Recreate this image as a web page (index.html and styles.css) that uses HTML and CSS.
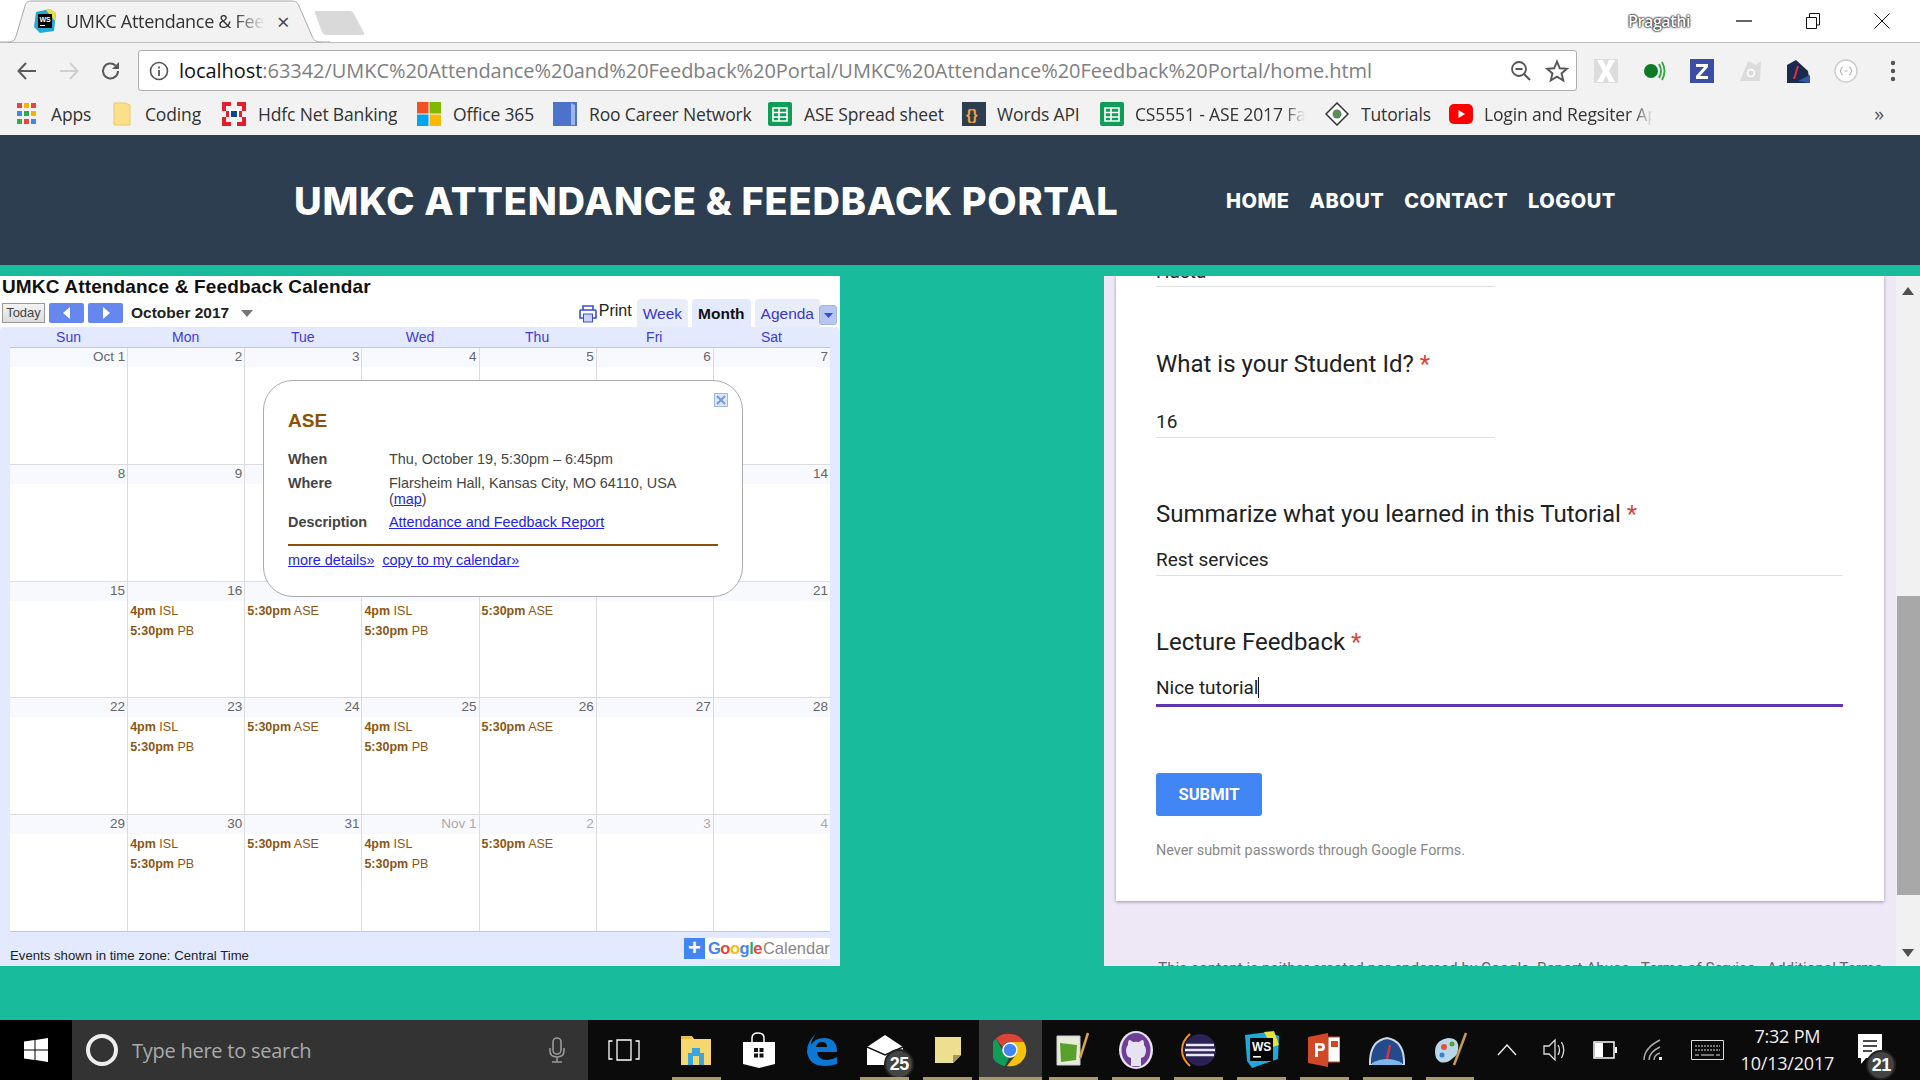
FILE: index.html
```html
<!DOCTYPE html>
<html lang="en">
<head>
<meta charset="utf-8">
<title>UMKC Attendance &amp; Feedback Portal</title>
<link rel="stylesheet" href="styles.css">
</head>
<body>
<div class="chrome">
  <div class="tabstrip">
    <div class="tab">
      <svg class="tab-shape" width="330" height="43" viewBox="0 0 330 43"><path d="M0 42H8C14 42 15 40 17 33L25 6C26 2 28 1 32 1H292C296 1 297 2 299 6L312 36C314 40 315 42 322 42H330" fill="#f2f2f2" stroke="#a9a9a9"/><path d="M0 42.5H8M322 42.5H330" stroke="#bbb"/></svg>
      <svg class="favicon" width="22" height="24" viewBox="0 0 22 24"><path d="M2 3 16 0 22 4 20 22 6 24 0 18Z" fill="#1fa8d8"/><path d="M12 1 16 0 22 4 21 12Z" fill="#e6e23a"/><rect x="4" y="5" width="14" height="14" fill="#000"/><text x="5.5" y="13" class="fav-text">WS</text><rect x="6" y="16" width="5" height="1" fill="#fff"/></svg>
      <span class="tab-title">UMKC Attendance &amp; Feedback Portal</span>
      <span class="tab-close">×</span>
    </div>
    <svg class="newtab" width="52" height="26" viewBox="0 0 52 26"><path d="M2 1H36C38 1 39 2 40 4L50 23C51 25 50 25 48 25H12C10 25 9 24 8 22L1 3C1 2 1 1 2 1Z" fill="#d9d9d9"/></svg>
    <span class="profile">Pragathi</span>
    <div class="winbtns">
      <svg width="16" height="16" viewBox="0 0 16 16"><path d="M0 8H16" stroke="#111" stroke-width="1.3"/></svg>
      <svg width="16" height="16" viewBox="0 0 16 16"><path d="M1.5 4.5H11.5V15.5H1.5ZM4.5 4V.5H14.5V12H12" fill="none" stroke="#111"/></svg>
      <svg width="16" height="16" viewBox="0 0 16 16"><path d="M.5.5 15.5 15.5M15.5.5 .5 15.5" stroke="#111"/></svg>
    </div>
  </div>
  <div class="toolbar">
    <div class="navs">
      <svg width="22" height="22" viewBox="0 0 22 22"><path d="M20 11H3M10 3 2.5 11 10 19" fill="none" stroke="#5a5a5a" stroke-width="2"/></svg>
      <svg width="22" height="22" viewBox="0 0 22 22"><path d="M2 11H19M12 3 19.5 11 12 19" fill="none" stroke="#cfcfcf" stroke-width="2"/></svg>
      <svg width="22" height="22" viewBox="0 0 22 22"><path d="M18 11A7.500 7.500 0 1 1 15.500 5.400" fill="none" stroke="#5a5a5a" stroke-width="2"/><path d="M19 2V9H12Z" fill="#5a5a5a"/></svg>
    </div>
    <div class="omnibox">
      <svg width="20" height="20" viewBox="0 0 20 20"><circle cx="10" cy="10" r="8.500" fill="none" stroke="#555" stroke-width="1.600"/><path d="M10 9V15M10 5.500V7.500" stroke="#555" stroke-width="1.800"/></svg>
      <span class="url"><b>localhost</b>:63342/UMKC%20Attendance%20and%20Feedback%20Portal/UMKC%20Attendance%20Feedback%20Portal/home.html</span>
      <svg width="22" height="22" viewBox="0 0 22 22"><circle cx="9" cy="9" r="7" fill="none" stroke="#555" stroke-width="1.800"/><path d="M5.500 9H12.500M14 14 20 20" stroke="#555" stroke-width="2"/></svg>
      <svg class="star" width="24" height="24" viewBox="0 0 24 24"><path d="M12 2.500 14.800 9.300 22 9.800 16.500 14.400 18.300 21.500 12 17.700 5.700 21.500 7.500 14.400 2 9.800 9.200 9.300Z" fill="none" stroke="#555" stroke-width="1.900"/></svg>
    </div>
    <div class="exts">
      <svg width="24" height="24" viewBox="0 0 24 24"><rect width="24" height="24" fill="#ddd"/><path d="M3 1H9L12 8 15 1H21L15 12 21 23H15L12 16 9 23H3L9 12Z" fill="#fff"/></svg>
      <svg width="24" height="24" viewBox="0 0 24 24"><circle cx="9" cy="12" r="7" fill="#0d7a25"/><path d="M17 5Q21 12 17 19M20 3Q25 12 20 21" fill="none" stroke="#2aa63f" stroke-width="1.800"/></svg>
      <svg width="24" height="24" viewBox="0 0 24 24"><rect width="24" height="24" fill="#3b4ea6"/><path d="M6 5H18V8L10 17H18V20H6V17L14 8H6Z" fill="#fff"/></svg>
      <svg width="24" height="24" viewBox="0 0 24 24"><path d="M2 22 10 2 18 6 23 2 22 22Z" fill="#dcdcdc"/><circle cx="13" cy="14" r="3.500" fill="none" stroke="#fff" stroke-width="1.500"/></svg>
      <svg width="24" height="24" viewBox="0 0 24 24"><path d="M1 24V6L10 1 22 12 24 24Z" fill="#1c2a52"/><path d="M8 20 12 7" stroke="#d9323f" stroke-width="2"/><path d="M12 22 24 24V16Z" fill="#2b59b0"/></svg>
      <svg width="24" height="24" viewBox="0 0 24 24"><circle cx="12" cy="12" r="11" fill="#fff" stroke="#ccc" stroke-width="1.400"/><path d="M9 8Q7 8 7 10V11L6 12 7 13V14Q7 16 9 16M15 8Q17 8 17 10V11L18 12 17 13V14Q17 16 15 16M10.500 12H13.500" fill="none" stroke="#aaa"/></svg>
      <svg class="menu-dots" width="6" height="22" viewBox="0 0 6 22"><circle cx="3" cy="3" r="2.200" fill="#555"/><circle cx="3" cy="11" r="2.200" fill="#555"/><circle cx="3" cy="19" r="2.200" fill="#555"/></svg>
    </div>
  </div>
  <div class="bookmarks">
    <a class="bm b-apps"><svg width="20" height="22" viewBox="0 0 20 22"><g fill="#e8453c"><rect width="5" height="5"/><rect x="7" width="5" height="5" fill="#f4b400"/><rect x="14" width="5" height="5" fill="#e8453c"/></g><rect y="8" width="5" height="5" fill="#4285f4"/><rect x="7" y="8" width="5" height="5" fill="#34a853"/><rect x="14" y="8" width="5" height="5" fill="#f4b400"/><rect y="16" width="5" height="5" fill="#34a853"/><rect x="7" y="16" width="5" height="5" fill="#e8453c"/><rect x="14" y="16" width="5" height="5" fill="#4285f4"/></svg><span>Apps</span></a>
    <a class="bm b-coding"><svg width="18" height="24" viewBox="0 0 18 24"><path d="M1 1H12L17 3V23H1Z" fill="#fbe08a" stroke="#e8c96a"/></svg><span>Coding</span></a>
    <a class="bm b-hdfc"><svg width="24" height="24" viewBox="0 0 24 24"><path d="M0 0H9V4H4V9H0ZM15 0H24V9H20V4H15ZM0 15H4V20H9V24H0ZM20 15H24V24H15V20H20Z" fill="#e31e2d"/><rect x="4" y="9" width="16" height="6" fill="#e31e2d"/><rect x="7" y="7" width="10" height="10" fill="#fff"/><rect x="9" y="9" width="6" height="6" fill="#004c8f"/></svg><span>Hdfc Net Banking</span></a>
    <a class="bm b-office"><svg width="24" height="24" viewBox="0 0 24 24"><rect width="11.500" height="11.500" fill="#f25022"/><rect x="12.500" width="11.500" height="11.500" fill="#7fba00"/><rect y="12.500" width="11.500" height="11.500" fill="#00a4ef"/><rect x="12.500" y="12.500" width="11.500" height="11.500" fill="#ffb900"/></svg><span>Office 365</span></a>
    <a class="bm b-roo"><svg width="24" height="24" viewBox="0 0 24 24"><rect width="24" height="24" fill="#4d72c9"/><path d="M18 1 22 3V23H18Z" fill="#9db4e6"/></svg><span>Roo Career Network</span></a>
    <a class="bm b-ase"><svg width="24" height="24" viewBox="0 0 24 24"><rect width="24" height="24" rx="2" fill="#0f9d58"/><path d="M5 6H19V19H5ZM5 10.500H19M5 15H19M11 6V19" fill="none" stroke="#fff" stroke-width="1.600"/></svg><span>ASE Spread sheet</span></a>
    <a class="bm b-words"><svg width="24" height="24" viewBox="0 0 24 24"><rect width="24" height="24" fill="#2c3e50"/><text x="4" y="18" class="brace">{}</text></svg><span>Words API</span></a>
    <a class="bm b-cs"><svg width="24" height="24" viewBox="0 0 24 24"><rect width="24" height="24" rx="2" fill="#0f9d58"/><path d="M5 6H19V19H5ZM5 10.500H19M5 15H19M11 6V19" fill="none" stroke="#fff" stroke-width="1.600"/></svg><span class="fade">CS5551 - ASE 2017 Fall</span></a>
    <a class="bm b-tut"><svg width="24" height="24" viewBox="0 0 24 24"><path d="M12 1 23 12 12 23 1 12Z" fill="#fff" stroke="#333" stroke-width="1.500"/><circle cx="12" cy="12" r="4.500" fill="#5b8a5b"/></svg><span>Tutorials</span></a>
    <a class="bm b-login"><svg width="24" height="24" viewBox="0 0 24 24"><rect y="2" width="24" height="20" rx="5" fill="#f00"/><path d="M9.500 8V16L16 12Z" fill="#fff"/></svg><span class="fade">Login and Regsiter App</span></a>
    <span class="more">»</span>
  </div>
</div>

<header class="site-header">
  <h1 class="site-title">UMKC ATTENDANCE &amp; FEEDBACK PORTAL</h1>
  <nav class="site-nav"><a>HOME</a><a>ABOUT</a><a>CONTACT</a><a>LOGOUT</a></nav>
</header>

<main class="stage">
  <section class="calendar">
    <div class="cal-title">UMKC Attendance &amp; Feedback Calendar</div>
    <div class="cal-bar">
      <span class="today">Today</span>
      <span class="arrow-btn"><svg width="10" height="12" viewBox="0 0 10 12"><path d="M8 0V12L1 6Z" fill="#fff"/></svg></span>
      <span class="arrow-btn"><svg width="10" height="12" viewBox="0 0 10 12"><path d="M2 0V12L9 6Z" fill="#fff"/></svg></span>
      <span class="cal-month">October 2017</span>
      <svg class="month-caret" width="12" height="7" viewBox="0 0 12 7"><path d="M0 0H12L6 7Z" fill="#777"/></svg>
      <span class="cal-bar-right">
        <svg class="print-ico" width="18" height="18" viewBox="0 0 18 18"><path d="M4 5V1H14V5M4 13H1V6Q1 5 2 5H16Q17 5 17 6V13H14" fill="none" stroke="#3a4ae0" stroke-width="1.600"/><rect x="4.500" y="9" width="9" height="8" fill="#cdd3f5" stroke="#3a4ae0"/></svg>
        <span class="print">Print</span>
        <span class="vtab">Week</span>
        <span class="vtab active">Month</span>
        <span class="vtab">Agenda</span>
        <span class="vdrop"><svg width="9" height="5" viewBox="0 0 9 5"><path d="M0 0H9L4.500 5Z" fill="#3a4ae0"/></svg></span>
      </span>
    </div>
    <div class="cal-frame">
      <div class="dow"><span>Sun</span><span>Mon</span><span>Tue</span><span>Wed</span><span>Thu</span><span>Fri</span><span>Sat</span></div>
      <div class="weeks">
        <div class="week">
          <div class="day"><div class="num">Oct 1</div></div><div class="day"><div class="num">2</div></div><div class="day"><div class="num">3</div></div><div class="day"><div class="num">4</div></div><div class="day"><div class="num">5</div></div><div class="day"><div class="num">6</div></div><div class="day"><div class="num">7</div></div>
        </div>
        <div class="week">
          <div class="day"><div class="num">8</div></div><div class="day"><div class="num">9</div></div><div class="day"><div class="num"></div></div><div class="day"><div class="num"></div></div><div class="day"><div class="num"></div></div><div class="day"><div class="num"></div></div><div class="day"><div class="num">14</div></div>
        </div>
        <div class="week">
          <div class="day"><div class="num">15</div></div>
          <div class="day"><div class="num">16</div><p class="ev"><b>4pm</b> ISL</p><p class="ev"><b>5:30pm</b> PB</p></div>
          <div class="day"><div class="num"></div><p class="ev"><b>5:30pm</b> ASE</p></div>
          <div class="day"><div class="num"></div><p class="ev"><b>4pm</b> ISL</p><p class="ev"><b>5:30pm</b> PB</p></div>
          <div class="day"><div class="num"></div><p class="ev"><b>5:30pm</b> ASE</p></div>
          <div class="day"><div class="num"></div></div>
          <div class="day"><div class="num">21</div></div>
        </div>
        <div class="week">
          <div class="day"><div class="num">22</div></div>
          <div class="day"><div class="num">23</div><p class="ev"><b>4pm</b> ISL</p><p class="ev"><b>5:30pm</b> PB</p></div>
          <div class="day"><div class="num">24</div><p class="ev"><b>5:30pm</b> ASE</p></div>
          <div class="day"><div class="num">25</div><p class="ev"><b>4pm</b> ISL</p><p class="ev"><b>5:30pm</b> PB</p></div>
          <div class="day"><div class="num">26</div><p class="ev"><b>5:30pm</b> ASE</p></div>
          <div class="day"><div class="num">27</div></div>
          <div class="day"><div class="num">28</div></div>
        </div>
        <div class="week">
          <div class="day"><div class="num">29</div></div>
          <div class="day"><div class="num">30</div><p class="ev"><b>4pm</b> ISL</p><p class="ev"><b>5:30pm</b> PB</p></div>
          <div class="day"><div class="num">31</div><p class="ev"><b>5:30pm</b> ASE</p></div>
          <div class="day"><div class="num off">Nov 1</div><p class="ev"><b>4pm</b> ISL</p><p class="ev"><b>5:30pm</b> PB</p></div>
          <div class="day"><div class="num off">2</div><p class="ev"><b>5:30pm</b> ASE</p></div>
          <div class="day"><div class="num off">3</div></div>
          <div class="day"><div class="num off">4</div></div>
        </div>
      </div>
      <div class="cal-foot">
        <span>Events shown in time zone: Central Time</span>
        <span class="gcal"><span class="gplus">+</span><span class="glogo"><i class="g-b">G</i><i class="g-r">o</i><i class="g-y">o</i><i class="g-b">g</i><i class="g-g">l</i><i class="g-r">e</i></span><span class="gword">Calendar</span></span>
      </div>
    </div>
    <div class="bubble">
      <svg class="bubble-close" width="14" height="14" viewBox="0 0 14 14"><rect x=".5" y=".5" width="13" height="13" fill="#dfe7fb" stroke="#9db7ee"/><path d="M3 3 11 11M11 3 3 11" stroke="#6f9ae8" stroke-width="2"/></svg>
      <div class="bubble-title">ASE</div>
      <dl class="bubble-grid">
        <dt>When</dt><dd>Thu, October 19, 5:30pm – 6:45pm</dd>
        <dt>Where</dt><dd>Flarsheim Hall, Kansas City, MO 64110, USA<br>(<a>map</a>)</dd>
        <dt>Description</dt><dd><a>Attendance and Feedback Report</a></dd>
      </dl>
      <div class="bubble-links"><a>more details»</a><a>copy to my calendar»</a></div>
    </div>
  </section>

  <section class="form-frame">
    <div class="form-page">
      <div class="form-card">
        <div class="answer a-short a-first">Hasta</div>
        <div class="q q-first">What is your Student Id? <em>*</em></div>
        <div class="answer a-short">16</div>
        <div class="q q-two">Summarize what you learned in this Tutorial <em>*</em></div>
        <div class="answer a-two">Rest services</div>
        <div class="q q-three">Lecture Feedback <em>*</em></div>
        <div class="answer a-two a-focus">Nice tutorial<i class="caret"></i></div>
        <span class="submit">SUBMIT</span>
        <p class="never">Never submit passwords through Google Forms.</p>
      </div>
      <p class="form-foot">This content is neither created nor endorsed by Google. Report Abuse - Terms of Service - Additional Terms</p>
    </div>
    <div class="scrollbar">
      <svg width="12" height="8" viewBox="0 0 12 8"><path d="M0 8H12L6 0Z" fill="#505050"/></svg>
      <div class="thumb"></div>
      <svg class="sb-down" width="12" height="8" viewBox="0 0 12 8"><path d="M0 0H12L6 8Z" fill="#505050"/></svg>
    </div>
  </section>
</main>

<footer class="taskbar">
  <div class="start"><svg width="24" height="24" viewBox="0 0 24 24"><path d="M0 3.500 10.500 2V11.500H0ZM11.500 1.900 24 0V11.500H11.500ZM0 12.500H10.500V22L0 20.500ZM11.500 12.500H24V24L11.500 22.100Z" fill="#fff"/></svg></div>
  <div class="search">
    <svg class="cortana" width="34" height="34" viewBox="0 0 34 34"><circle cx="17" cy="17" r="14" fill="none" stroke="#eee" stroke-width="4"/></svg>
    <span class="search-text">Type here to search</span>
    <svg width="16" height="26" viewBox="0 0 16 26"><rect x="4" y="1" width="8" height="16" rx="4" fill="none" stroke="#999" stroke-width="1.600"/><path d="M1 11V14Q1 20 8 20 15 20 15 14V11M8 20V25M3 25H13" fill="none" stroke="#999" stroke-width="1.600"/></svg>
  </div>
  <div class="tview"><svg width="32" height="22" viewBox="0 0 32 22"><path d="M9 1H23V21H9ZM4.500 2H1V20H4.500M27.500 2H31V20H27.500" fill="none" stroke="#fff" stroke-width="1.300"/></svg></div>
  <div class="app run"><svg width="32" height="32" viewBox="0 0 32 32"><path d="M1 2H12L14 5H31V31H1Z" fill="#f5d76e"/><path d="M1 2H12V5H1Z" fill="#e7c04a"/><path d="M8 31V19H12V14H20V19H24V31H19V22H13V31Z" fill="#3aa6e0"/></svg></div>
  <div class="app bare"><svg width="34" height="36" viewBox="0 0 34 36"><path d="M1 10H33V32L17 36 1 32Z" fill="#fff"/><path d="M10 10V6Q10 1 16 1 22 1 22 6V10" fill="none" stroke="#fff" stroke-width="1.500"/><path d="M12 16H16V20H12ZM17.500 16H21.500V20H17.500ZM12 21.500H16V25.500H12ZM17.500 21.500H21.500V25.500H17.500Z" fill="#111"/></svg></div>
  <div class="app bare"><svg width="32" height="34" viewBox="0 0 32 34"><path d="M31 19H11Q12 27 21 27 26 27 31 24V31Q25 33 19 33 3 33 1 19 1 8 10 1 5 7 5 12 9 5 18 5 31 5 31 19ZM21 14Q21 9 16 9 11 9 10 14Z" fill="#0a78d4"/></svg></div>
  <div class="app run badge-host"><svg width="36" height="30" viewBox="0 0 36 30"><path d="M0 12 18 0 36 12V30H0Z" fill="#fff"/><path d="M0 12 18 20 36 12" fill="none" stroke="#111" stroke-width="1.500"/></svg><span class="badge b-mail">25</span></div>
  <div class="app run"><svg width="28" height="28" viewBox="0 0 28 28"><path d="M1 1H27V19L19 27H1Z" fill="#ecdf90"/><path d="M27 19H19V27Z" fill="#a59a50"/></svg></div>
  <div class="app run active"><svg width="34" height="34" viewBox="0 0 34 34"><path d="M17 1A16 16 0 0 1 31 9H17A8 8 0 0 0 9.500 14L3 5.500A16 16 0 0 1 17 1Z" fill="#db4437"/><path d="M3 5.500 10.500 19A8 8 0 0 0 16 25L12 33A16 16 0 0 1 3 5.500Z" fill="#0f9d58"/><path d="M31 9A16 16 0 0 1 14 33L21.500 23.500A8 8 0 0 0 24 15L17 9Z" fill="#f4c20d"/><circle cx="17" cy="17" r="7" fill="#4285f4" stroke="#fff" stroke-width="1.600"/></svg></div>
  <div class="app run"><svg width="34" height="36" viewBox="0 0 34 36"><path d="M1 4H24V33H1Z" fill="#e6ecd5" stroke="#ccd"/><path d="M4 11 21 13 20 28 5 30Z" fill="#5aa02c"/><path d="M32 1 24 26" stroke="#d9a441" stroke-width="2.500"/></svg></div>
  <div class="app run"><svg width="34" height="38" viewBox="0 0 34 38"><ellipse cx="17" cy="19" rx="17" ry="19" fill="#e7e2ef"/><ellipse cx="17" cy="19" rx="14.500" ry="17" fill="#6f3f98"/><path d="M12 35V27Q7 26 7 19 7 16 9 14 8.500 11 10 9 12 9 14 11 17 10.500 20 11 22 9 24 9 25.500 11 25 14 27 16 27 19 27 26 22 27V35Z" fill="#e7e2ef"/></svg></div>
  <div class="app run"><svg width="36" height="36" viewBox="0 0 36 36"><circle cx="19" cy="18" r="16" fill="#2c2255"/><path d="M4 18H34M5 13H33M5 23H33" stroke="#e8e6f0" stroke-width="2.500"/><path d="M9 2Q1 9 1 18 1 27 9 34" fill="none" stroke="#f7941e" stroke-width="2"/></svg></div>
  <div class="app run"><svg width="36" height="38" viewBox="0 0 36 38"><path d="M1 4 24 1 35 5 34 28 8 37 3 30Z" fill="#1fa8d8"/><path d="M20 1 30 0 35 14 28 16Z" fill="#e6e23a"/><rect x="6" y="7" width="23" height="23" fill="#000"/><text x="8" y="20" class="ws-text">WS</text><rect x="9" y="25" width="8" height="1.600" fill="#fff"/></svg></div>
  <div class="app run"><svg width="32" height="34" viewBox="0 0 32 34"><path d="M0 4 20 0V34L0 30Z" fill="#d24726"/><path d="M20 4H32V29H20Z" fill="#fff" stroke="#d24726"/><path d="M7 10H13Q17 10 17 14 17 18 13 18H10V24H7ZM10 12.500V15.500H12.500Q14 15.500 14 14 14 12.500 12.500 12.500Z" fill="#fff"/><path d="M23 8H30V14H23Z" fill="#d24726"/></svg></div>
  <div class="app run"><svg width="36" height="30" viewBox="0 0 36 30"><path d="M1 30Q0 6 18 3 36 6 35 30Z" fill="#234b8c" stroke="#c9d6e4" stroke-width="2"/><path d="M18 24 21 10" stroke="#d9323f" stroke-width="2.500"/><path d="M3 28Q18 20 33 28V30H3Z" fill="#7db7e8"/></svg></div>
  <div class="app run"><svg width="36" height="36" viewBox="0 0 36 36"><path d="M3 20Q3 8 16 6 28 6 26 18 25 24 21 26 15 32 8 30 3 27 3 20Z" fill="#b8d7e8"/><circle cx="12" cy="15" r="3" fill="#e6533c"/><circle cx="20" cy="12" r="2.500" fill="#5aa02c"/><circle cx="10" cy="23" r="2.500" fill="#3a7fd0"/><path d="M34 1 22 33" stroke="#c49a55" stroke-width="2.600"/></svg></div>
  <div class="tray">
    <svg width="20" height="12" viewBox="0 0 20 12"><path d="M1 11 10 1 19 11" fill="none" stroke="#eee" stroke-width="1.400"/></svg>
    <svg width="24" height="26" viewBox="0 0 24 26"><path d="M1 9H6L12 3V23L6 17H1Z" fill="none" stroke="#ddd" stroke-width="1.300"/><path d="M15 8Q18 13 15 18M18.500 5Q23 13 18.500 21" fill="none" stroke="#ddd" stroke-width="1.300"/></svg>
    <svg width="24" height="18" viewBox="0 0 24 18"><path d="M1 1H21V17H1Z" fill="none" stroke="#fff" stroke-width="1.500"/><rect x="2" y="2" width="8" height="14" fill="#fff"/><rect x="22" y="6" width="2" height="6" fill="#fff"/></svg>
    <svg width="22" height="22" viewBox="0 0 22 22"><path d="M1 21Q1 9 17 1M6 21Q6 13 17 8M11 21Q11 16 17 14" fill="none" stroke="#aaa" stroke-width="1.500"/><rect x="16" y="18" width="3" height="3" fill="#eee"/></svg>
    <svg width="33" height="20" viewBox="0 0 33 20"><path d="M.5.5H32.500V19.500H.5Z" fill="none" stroke="#ddd"/><path d="M4 6H29M4 10H29" stroke="#ddd" stroke-dasharray="2 1"/><path d="M4 15H8M10 15H23M25 15H29" stroke="#ddd"/></svg>
  </div>
  <div class="clock"><span>7:32 PM</span><span>10/13/2017</span></div>
  <div class="notif badge-host"><svg width="24" height="32" viewBox="0 0 24 32"><path d="M0 0H24V24H8L3 30V24H0Z" fill="#fff"/><path d="M5 7H19M5 12H19M5 17H14" stroke="#111" stroke-width="1.500"/></svg><span class="badge b-notif">21</span></div>
</footer>
</body>
</html>
```

FILE: styles.css
```css
* { box-sizing: border-box; }
html, body { margin: 0; padding: 0; }
body { width: 1920px; height: 1080px; overflow: hidden; display: flex; flex-direction: column; background: #18bc9c; font-family: "Liberation Sans", Arial, sans-serif; }
p, h1, dl, dd, dt { margin: 0; }
i, em { font-style: normal; }

/* browser chrome */
.chrome { height: 135px; flex: none; background: #f2f2f2; }
.tabstrip { height: 43px; background: #fff; border-bottom: 1px solid #bdbdbd; display: flex; align-items: center; position: relative; font-family: "Open Sans", sans-serif; }
.tab { width: 314px; height: 43px; position: relative; display: flex; align-items: center; flex: none; }
.tab-shape { position: absolute; left: 0; top: 0; }
.favicon { position: relative; margin-left: 34px; flex: none; }
.fav-text { font: 700 7px "Liberation Sans", sans-serif; fill: #fff; }
.tab-title { position: relative; margin-left: 10px; width: 199px; font-size: 18px; color: #333; white-space: nowrap; overflow: hidden; letter-spacing: -.3px; -webkit-mask-image: linear-gradient(90deg, #000 85%, transparent); mask-image: linear-gradient(90deg, #000 85%, transparent); }
.tab-close { position: relative; margin-left: 12px; font-size: 22px; line-height: 22px; color: #444; }
.newtab { flex: none; margin-top: 4px; }
.profile { margin-left: auto; margin-right: 46px; font-size: 16px; font-weight: 600; color: #fff; letter-spacing: -.4px; text-shadow: 0 0 2px #222, 0 0 2px #222, 0 0 2px #222; }
.winbtns { display: flex; gap: 53px; margin-right: 30px; align-items: center; }

.toolbar { height: 49px; display: flex; align-items: center; padding-left: 16px; padding-top: 6px; }
.navs { display: flex; gap: 20px; width: 122px; flex: none; }
.omnibox { width: 1439px; height: 41px; flex: none; background: #fff; border: 1px solid #aeaeae; border-radius: 3px; display: flex; align-items: center; padding: 0 7px 0 10px; gap: 10px; font-family: "Open Sans", sans-serif; }
.url { flex: 1; font-size: 20px; color: #808080; white-space: nowrap; letter-spacing: -.05px; }
.url b { font-weight: 400; color: #111; }
.star { margin-left: 3px; }
.exts { display: flex; align-items: center; gap: 24px; padding-left: 17px; }
.menu-dots { margin-left: 8px; }

.bookmarks { height: 43px; display: flex; align-items: center; padding-left: 17px; font-family: "Open Sans", sans-serif; font-size: 17.500px; color: #333; letter-spacing: -.15px; }
.bm { display: flex; align-items: center; flex: none; white-space: nowrap; overflow: hidden; }
.bm svg { flex: none; }
.bm span { overflow: hidden; }
.fade { -webkit-mask-image: linear-gradient(90deg, #000 88%, transparent); mask-image: linear-gradient(90deg, #000 88%, transparent); }
.b-apps { width: 96px; gap: 14px; }
.b-coding { width: 109px; gap: 14px; }
.b-hdfc { width: 195px; gap: 12px; }
.b-office { width: 136px; gap: 12px; }
.b-roo { width: 215px; gap: 12px; }
.b-ase { width: 194px; gap: 12px; }
.b-words { width: 138px; gap: 11px; }
.b-cs { width: 225px; gap: 11px; }
.b-cs span { width: 170px; }
.b-tut { width: 124px; gap: 12px; }
.b-login { width: 204px; gap: 11px; }
.b-login span { width: 170px; }
.more { margin-left: auto; margin-right: 36px; font-size: 20px; color: #555; }
.brace { font: 700 15px "Liberation Sans", sans-serif; fill: #f2a33a; }

/* site header */
.site-header { height: 130px; flex: none; background: #2c3e50; display: flex; align-items: center; padding: 2px 0 0 294px; font-family: "Inter", sans-serif; color: #fff; }
.site-title { width: 932px; flex: none; font-size: 38px; font-weight: 800; letter-spacing: .75px; white-space: nowrap; }
.site-nav { display: flex; gap: 20px; font-size: 20px; font-weight: 800; letter-spacing: .5px; }

/* stage */
.stage { flex: 1; min-height: 0; padding-top: 11px; padding-bottom: 54px; display: flex; justify-content: space-between; }

/* calendar */
.calendar { width: 840px; height: 690px; flex: none; background: #fff; position: relative; display: flex; flex-direction: column; overflow: hidden; }
.cal-title { padding-left: 2px; height: 23px; font-size: 19px; font-weight: 700; line-height: 21px; color: #111; letter-spacing: .15px; white-space: nowrap; }
.cal-bar { height: 28px; display: flex; align-items: center; padding-left: 2px; flex: none; }
.today { width: 43px; height: 20px; border: 1px solid #999; background: linear-gradient(#f3f3f3, #ddd); font-size: 13px; line-height: 17px; text-align: center; color: #444; }
.arrow-btn { width: 35px; height: 20px; margin-left: 4px; background: #6688ee; border-radius: 2px; display: flex; align-items: center; justify-content: center; }
.cal-month { margin-left: 8px; font-size: 15.500px; font-weight: 700; color: #222; white-space: nowrap; }
.month-caret { margin-left: 12px; }
.cal-bar-right { margin-left: auto; display: flex; align-items: flex-end; height: 28px; }
.print-ico { margin-bottom: 4px; }
.print { font-size: 16px; color: #222; margin: 0 5px 8px 2px; line-height: 16px; }
.vtab { height: 28px; margin-right: 4px; padding: 0 6px; line-height: 29px; font-size: 15.500px; color: #3a35cf; background: #e8edfa; border-radius: 4px 4px 0 0; }
.vtab.active { font-weight: 700; color: #111; background: #e3e9ff; }
.vdrop { width: 18px; height: 20px; margin: 0 3px 2px -5px; background: #b7c6f0; border: 1px solid #a2b5ea; border-radius: 3px; display: flex; align-items: center; justify-content: center; }
.cal-frame { flex: 1; min-height: 0; background: #e3e9ff; border-radius: 4px 4px 0 0; padding: 0 10px; display: flex; flex-direction: column; }
.dow { height: 21px; flex: none; display: grid; grid-template-columns: repeat(7, 1fr); border-bottom: 1px solid #b8c6f8; }
.dow span { text-align: center; font-size: 14px; line-height: 20px; color: #3f3ad8; }
.weeks { height: 584px; flex: none; background: #fff; border-bottom: 1px solid #b8c6f8; display: flex; flex-direction: column; }
.week { flex: 1; display: grid; grid-template-columns: repeat(7, 1fr); border-bottom: 1px solid #dcdcdc; }
.week:last-child { border-bottom: 0; }
.day { border-left: 1px solid #dcdcdc; }
.day:first-child { border-left: 0; }
.num { height: 19px; background: #f8f9ff; text-align: right; padding-right: 2px; font-size: 13.500px; line-height: 18px; color: #666; }
.num.off { color: #aaa; }
.ev { margin: 2px 0 0 1px; height: 17px; padding-left: 1px; font-size: 12.500px; line-height: 17px; color: #8c5612; white-space: nowrap; }
.ev + .ev { margin-top: 3px; }
.ev b { font-weight: 700; }
.cal-foot { flex: 1; display: flex; justify-content: space-between; align-items: flex-start; font-size: 13.200px; color: #222; }
.cal-foot > span:first-child { margin-top: 16px; }
.gcal { margin-top: 6px; height: 21px; width: 146px; background: #fff; display: flex; align-items: center; white-space: nowrap; }
.gplus { width: 21px; height: 21px; background: #4285f4; color: #fff; text-align: center; font-weight: 700; font-size: 22px; line-height: 20px; flex: none; }
.glogo { margin-left: 3px; font-weight: 700; font-size: 16.500px; letter-spacing: -.5px; }
.gword { margin-left: 1px; color: #888; font-size: 16.500px; }
.g-b { color: #4285f4; } .g-r { color: #ea4335; } .g-y { color: #fbbc05; } .g-g { color: #34a853; }

/* event bubble */
.bubble { position: absolute; left: 263px; top: 104px; width: 480px; height: 217px; background: #fff; border: 1px solid #aaa; border-radius: 30px; padding: 27px 24px 0 24px; }
.bubble-close { position: absolute; right: 14px; top: 12px; }
.bubble-title { font-size: 19px; font-weight: 700; line-height: 26px; color: #8c5207; }
.bubble-grid { display: grid; grid-template-columns: 101px 1fr; margin-top: 17px; font-size: 14.400px; line-height: 16px; row-gap: 7px; color: #444; padding-bottom: 14px; border-bottom: 2px solid #8c5207; }
.bubble-grid dt { font-weight: 700; }
.bubble-grid dd:first-of-type { padding-bottom: 1px; }
.bubble-grid a, .bubble-links a { color: #2222ee; text-decoration: underline; }
.bubble-links { display: flex; gap: 8px; margin-top: 6px; font-size: 14.400px; line-height: 16px; }

/* form */
.form-frame { width: 816px; height: 690px; flex: none; display: flex; overflow: hidden; font-family: "Roboto", sans-serif; }
.form-page { flex: 1; background: #ede7f6; padding: 0 12px; overflow: hidden; }
.form-card { height: 625px; background: #fff; box-shadow: 0 1px 3px rgba(60,40,100,.45); padding: 0 40px; overflow: hidden; }
.answer { font-size: 19px; color: #222; border-bottom: 1px solid #e0e0e0; height: 32px; line-height: 32px; }
.a-first { height: 26px; margin-top: -15px; line-height: 22px; }
.a-short { width: 339px; }
.q { font-size: 24px; line-height: 30px; color: #202124; }
.q em { color: #db4437; }
.q-first { margin-top: 62px; margin-bottom: 27px; }
.q-two { margin-top: 61px; margin-bottom: 15px; }
.a-two { width: 687px; }
.q-three { margin-top: 51px; margin-bottom: 15px; }
.a-focus { height: 35px; border-bottom: 3px solid #5e35b1; }
.caret { display: inline-block; width: 1px; height: 21px; background: #111; vertical-align: -4px; }
.submit { display: block; width: 106px; height: 43px; margin-top: 66px; background: #4285f4; color: #fff; border-radius: 3px; font-size: 16.500px; font-weight: 700; line-height: 43px; text-align: center; }
.never { margin-top: 27px; font-size: 14.400px; line-height: 16px; color: #888; }
.form-foot { margin: 58px 0 0 42px; font-size: 15.300px; color: #666; white-space: nowrap; }
.scrollbar { width: 24px; flex: none; background: #f1f1f1; display: flex; flex-direction: column; align-items: center; position: relative; padding-top: 11px; }
.thumb { position: absolute; left: 1px; right: 0; top: 320px; height: 299px; background: #a8a8a8; }
.sb-down { margin-top: auto; margin-bottom: 9px; }

/* taskbar */
.taskbar { height: 60px; flex: none; background: #0b0b0b; display: flex; align-items: stretch; }
.start { width: 72px; flex: none; background: #000; display: flex; align-items: center; justify-content: center; }
.search { width: 516px; flex: none; background: #333; display: flex; align-items: center; padding: 0 23px 0 13px; font-family: "Open Sans", sans-serif; }
.search-text { flex: 1; margin-left: 13px; font-size: 20px; letter-spacing: -.25px; color: #aaa; }
.tview { width: 77px; flex: none; display: flex; align-items: center; padding-left: 20px; }
.app { width: 62.800px; flex: none; display: flex; align-items: center; justify-content: center; position: relative; }
.app.run::after { content: ""; position: absolute; left: 7px; right: 7px; bottom: 0; height: 3px; background: #a89a6b; }
.app.active { background: #3b3b3b; }
.app.active::after { left: 0; right: 0; }
.badge { position: absolute; width: 30px; height: 30px; border-radius: 50%; background: #444; border: 2px solid #222; color: #fff; font-size: 18px; font-weight: 700; text-align: center; line-height: 26px; letter-spacing: -.5px; }
.b-mail { right: 2px; bottom: 1px; }
.ws-text { font: 700 12px "Liberation Sans", sans-serif; fill: #fff; }
.tray { margin-left: 16px; display: flex; align-items: center; gap: 26px; flex: none; }
.clock { width: 100px; margin-left: 13px; display: flex; flex-direction: column; align-items: center; justify-content: center; gap: 6px; font-family: "Open Sans", sans-serif; font-size: 18px; letter-spacing: -.2px; line-height: 21px; color: #eee; flex: none; }
.notif { flex: none; margin-left: 21px; display: flex; align-items: center; position: relative; width: 40px; }
.b-notif { left: 8px; bottom: 0; }
```
